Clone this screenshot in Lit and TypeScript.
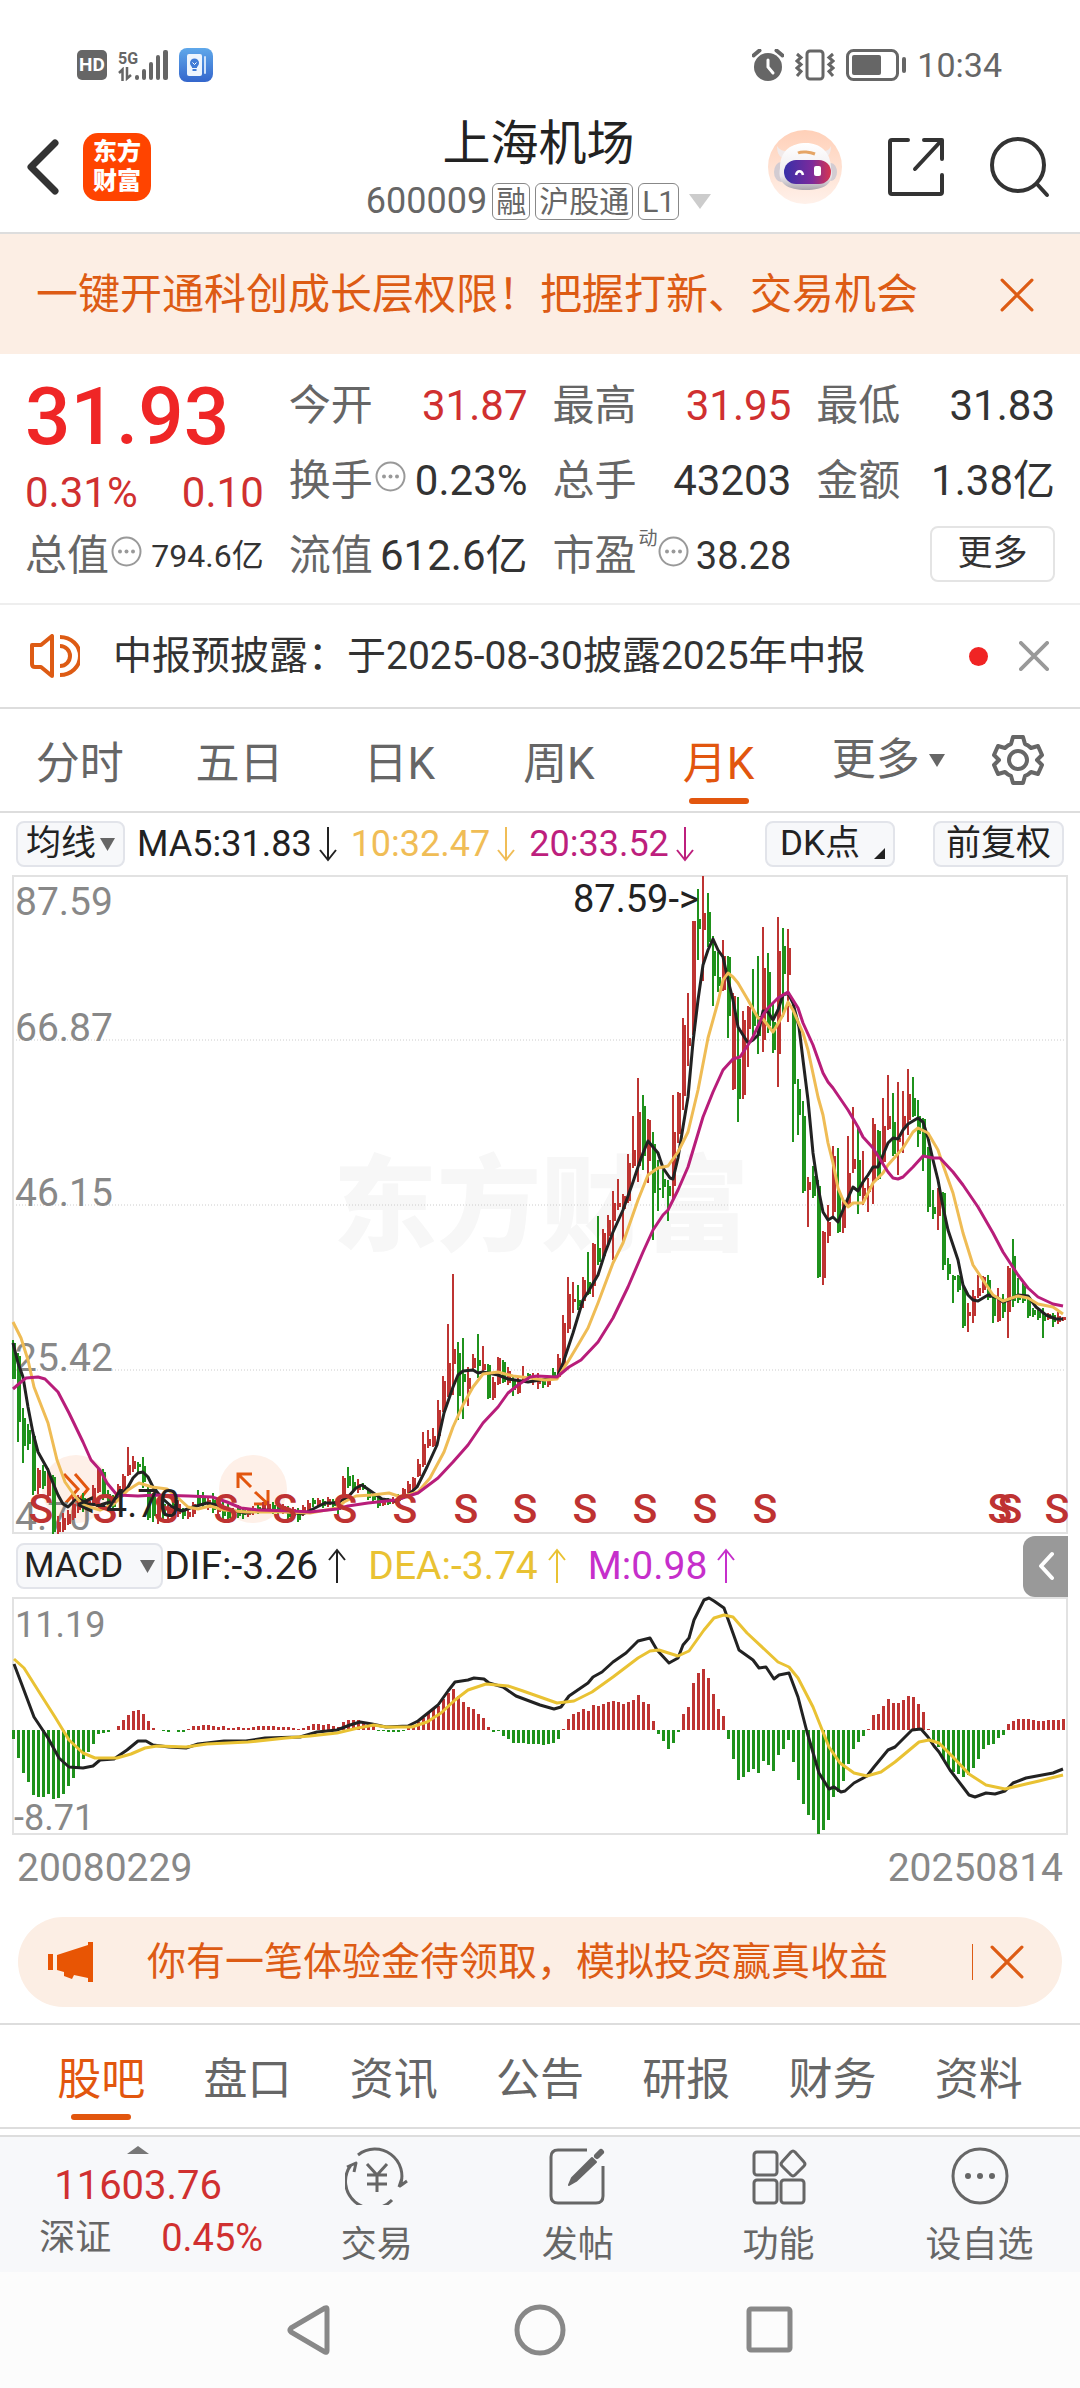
import { LitElement, html, svg, css } from "lit";
import { customElement, property, state } from "lit/decorators.js";
import { classMap } from "lit/directives/class-map.js";

/* Monthly bars: colour, high, low, body top, body bottom (chart units, y down). */
const CANDLES = `
g 464 503 467 503|g 477 566 480 546|g 532 587 542 570|g 548 574 554 568|g 554 619 560 615|r 592 618 594 612|g 589 613 595 610|r 592 626 600 620|g 599 658 601 656|r 640 658 646 656
r 637 656 642 654|r 634 649 638 648|r 621 644 628 642|r 619 637 624 634|g 617 636 622 632|r 624 632 625 631|r 609 629 612 628|r 593 617 594 616|g 593 624 596 620|g 614 629 618 628
g 619 634 621 631|r 608 624 610 622|r 598 621 600 620|r 571 600 589 599|r 580 596 585 593|g 586 596 588 591|g 581 612 590 606|g 611 644 615 642|g 617 646 620 640|r 627 648 630 642
g 624 644 628 640|r 629 646 631 640|g 626 644 628 640|r 624 641 628 638|g 632 643 634 640|r 634 643 636 641|r 626 641 628 638|g 614 629 620 628|g 616 631 622 628|r 622 634 624 632
g 617 637 624 634|r 625 638 628 636|g 626 643 630 640|g 628 644 632 642|r 632 645 634 641|g 629 642 632 640|g 631 643 634 639|r 632 641 634 639|r 630 639 632 637|g 629 638 631 636
r 626 637 629 635|r 625 637 628 634|g 626 638 629 636|g 629 640 631 637|r 628 638 630 636|g 630 643 633 641|r 631 643 633 640|g 632 646 634 644|r 629 640 631 638|r 624 636 627 634
g 622 631 624 628|r 622 631 624 629|g 623 632 625 630|r 621 631 623 629|g 623 632 625 630|g 622 638 624 634|r 600 624 602 622|g 591 612 600 610|g 599 614 606 614|r 603 617 608 614
g 607 614 609 613|g 614 624 616 622|g 617 626 619 624|g 621 632 622 630|r 622 630 624 629|g 622 629 623 628|r 621 628 623 627|g 618 627 620 625|r 612 621 613 620|r 605 617 608 616
r 601 614 602 612|r 583 601 588 600|r 556 591 568 589|r 554 572 563 570|r 552 571 560 570|r 524 564 534 560|r 500 536 505 534|r 448 521 487 519|r 398 519 473 488|g 466 544 477 520
g 462 543 498 506|r 491 530 502 513|r 478 494 482 492|g 458 502 484 490|r 470 496 488 494|g 488 523 489 522|r 501 524 506 522|r 481 509 482 508|g 484 507 486 506|r 491 509 495 507
g 501 520 505 514|r 500 518 505 517|r 490 506 500 505|g 497 504 498 503|r 497 509 500 506|r 497 513 503 508|g 502 512 503 509|r 500 511 501 509|g 492 502 496 501|r 478 502 482 501
r 439 491 447 490|r 401 457 418 453|r 406 437 423 426|g 409 434 424 430|r 401 432 404 425|g 376 419 406 418|r 367 421 368 410|g 340 389 372 386|r 353 384 357 380|r 339 371 344 360
r 315 384 327 345|r 303 334 327 331|r 318 367 320 333|r 278 327 287 325|r 240 292 274 290|r 202 306 236 290|g 219 294 230 280|r 243 307 244 285|g 256 364 268 317|g 284 335 312 314
g 294 322 303 311|g 304 345 310 320|r 219 324 256 310|r 216 267 217 258|r 142 234 149 220|r 117 190 162 170|r 45 159 45 155|g 13 84 43 53|r 0 105 37 54|g 17 71 36 66
g 60 130 75 100|g 76 116 101 110|r 64 115 80 114|g 80 162 81 140|r 117 214 120 213|g 121 246 183 223|r 135 223 144 219|r 130 191 131 153|g 93 162 136 150|g 80 178 140 160
r 51 176 92 164|g 77 157 96 150|g 127 177 146 174|r 41 211 75 178|g 52 141 70 98|r 53 146 72 99|g 134 266 136 208|g 203 259 213 239|g 225 317 240 315|r 301 351 306 314
g 290 322 300 320|g 304 402 310 401|r 355 409 356 402|r 329 367 346 360|r 270 342 280 336|g 272 357 318 356|r 324 357 330 352|r 260 332 297 331|r 231 297 283 293|g 251 338 284 320
r 275 329 312 320|r 302 336 310 316|r 242 328 248 304|g 254 304 255 303|r 222 289 250 286|r 199 254 240 253|g 217 280 246 278|r 206 299 262 266|r 215 277 240 250|r 193 259 218 244
g 201 241 222 240|g 224 271 240 258|g 242 295 243 280|g 271 336 273 331|g 314 343 331 338|r 312 354 313 340|g 316 394 317 389|g 382 404 388 398|g 399 427 400 404|g 399 416 400 414
g 406 452 412 450|r 427 456 436 440|r 414 447 420 440|r 399 422 412 420|r 400 417 401 414|g 399 424 404 422|g 421 447 422 440|r 412 446 425 445|g 418 442 424 436|r 390 462 392 436
g 363 431 380 425|g 402 427 418 424|g 407 427 410 425|g 421 442 424 440|g 432 441 434 439|g 434 444 436 442|g 432 462 440 445|r 437 444 438 443|g 437 451 439 446|r 436 448 440 446
r 441 445 441 444`
  .trim()
  .split(/[|\n]/)
  .map((row) => {
    const [tone, ...values] = row.split(" ");
    return { tone, values: values.map(Number) };
  });

const HISTOGRAM = [
  -9, -28, -43, -52, -65, -67, -67, -64, -69, -68, -64, -56, -48, -38, -29, -22, -14, -4, -3, -2,
  0, 4, 10, 15, 19, 20, 16, 9, 2, 0, -1, -2, 0, -2, -2, 1, 4, 4, 5, 5,
  4, 3, 4, 2, 2, 3, 2, 2, 3, 4, 4, 4, 4, 3, 3, 3, 2, 1, 2, 4,
  6, 6, 5, 6, 4, 3, 8, 10, 10, 10, 7, 6, 4, -1, -1, -2, -2, -2, -1, 2,
  4, 8, 12, 17, 21, 24, 31, 37, 41, 34, 28, 23, 21, 16, 12, 3, -2, -1, -6, -9,
  -13, -13, -13, -14, -14, -14, -15, -14, -13, -9, 1, 11, 16, 18, 21, 19, 25, 24, 26, 28,
  29, 28, 26, 28, 30, 35, 28, 26, 9, -4, -11, -19, -13, -2, 16, 23, 47, 57, 61, 52,
  36, 21, 14, -9, -29, -50, -47, -42, -39, -43, -31, -35, -41, -25, -19, -10, -32, -50, -74, -85,
  -90, -104, -100, -90, -67, -62, -51, -34, -19, -12, -6, 1, 15, 16, 24, 31, 27, 27, 30, 34,
  33, 26, 18, 1, -11, -17, -30, -38, -42, -44, -47, -45, -38, -29, -19, -15, -14, -8, -5, 6,
  9, 11, 11, 11, 10, 9, 9, 10, 10, 10, 11,
];

const MA5 =
  "13,467 18,487 23,501 28,531 33,557 38,576 48,594 53,607 58,619 63,628 68,631 77,622 88,628 100,629 110,626 119,622 128,611 133,602 138,597 143,596 148,601 153,611 162,622 172,631 182,635 193,631 207,627 217,629 227,634 246,637 262,634 282,635 303,638 317,631 325,627 337,627 348,621 356,612 362,609 372,616 382,623 396,625 408,619 417,611 427,591 437,569 444,537 453,511 458,499 463,495 473,494 478,497 483,496 498,499 508,503 528,506 540,504 557,502 563,487 573,457 583,424 588,416 598,399 605,377 613,356 623,334 633,306 638,291 643,277 648,265 658,277 663,292 670,302 673,303 678,282 683,251 688,221 693,166 698,124 703,89 708,74 713,63 718,74 723,81 728,104 733,124 738,151 743,159 748,167 753,164 758,159 763,135 768,136 773,144 778,134 783,119 788,117 793,127 799,151 803,184 808,224 813,277 818,311 823,336 828,344 833,341 838,346 843,334 848,322 853,311 858,315 863,306 868,299 873,291 878,291 883,279 888,267 893,262 898,263 903,254 908,248 918,242 923,246 928,262 933,284 938,304 943,331 948,354 958,384 963,409 968,419 973,424 978,425 988,419 998,422 1003,426 1013,422 1018,419 1028,420 1036,431 1046,439 1056,443 1063,443";
const MA10 =
  "13,446 21,462 28,484 34,511 48,547 57,584 65,606 74,619 83,629 100,634 114,628 128,614 139,607 152,611 167,613 177,621 188,631 198,633 210,630 224,634 246,636 282,636 310,637 337,632 344,626 356,620 372,619 389,617 401,621 418,616 430,602 444,576 453,551 463,529 473,511 483,498 498,496 513,500 530,502 545,504 557,503 569,484 578,469 588,452 598,427 613,387 623,367 638,324 648,299 658,292 668,290 678,276 688,256 698,214 708,162 718,126 723,104 728,97 733,101 738,107 748,124 758,142 763,143 773,156 783,139 788,126 793,134 803,157 808,174 818,221 823,239 828,267 833,287 838,312 843,324 848,331 853,327 863,327 873,307 883,297 888,289 903,272 913,256 918,252 928,257 938,274 943,289 953,317 963,357 973,389 983,404 993,419 1003,425 1018,420 1028,422 1038,428 1053,431 1063,438";
const MA20 =
  "13,513 21,506 26,502 38,501 45,503 58,516 69,537 83,566 91,584 100,594 107,607 117,619 138,620 155,619 189,620 212,621 227,626 241,632 258,634 293,635 310,636 337,633 348,630 368,627 396,624 418,617 438,602 453,586 468,569 483,547 498,531 508,517 518,509 530,501 537,500 557,501 569,491 581,484 598,466 613,442 628,411 643,376 653,354 663,339 668,334 678,314 688,291 703,241 713,216 723,194 733,183 740,181 748,169 753,161 763,139 768,132 778,122 788,116 798,132 803,147 813,169 823,197 828,206 833,212 848,234 858,251 863,261 873,272 888,296 893,302 898,303 903,301 913,291 923,280 933,282 940,282 953,296 963,309 978,331 993,357 1003,376 1018,399 1028,412 1038,421 1053,428 1063,430";
const DIF =
  "14,66 22,87 34,119 48,140 59,160 69,169 83,170 93,168 100,162 114,161 127,152 138,143 146,143 153,147 169,149 186,150 198,146 224,143 246,143 265,140 300,139 317,134 337,132 350,127 360,124 372,126 386,129 408,128 418,123 438,107 448,93 455,84 468,82 474,80 484,81 489,85 503,89 516,98 540,107 554,111 561,109 569,98 588,85 593,79 602,74 613,64 626,55 638,43 650,40 657,52 669,65 678,60 683,47 689,40 694,22 704,2 709,0 714,3 724,10 729,24 739,52 753,62 759,70 766,69 774,81 779,77 789,75 798,99 807,134 819,175 829,191 834,189 841,194 845,193 854,185 867,178 874,169 888,152 895,149 912,132 921,131 928,139 934,148 939,154 950,172 969,197 975,199 986,195 995,196 1005,193 1013,185 1026,180 1053,175 1063,171";
const DEA =
  "14,61 24,70 41,97 55,119 69,142 83,155 95,160 117,160 131,156 145,150 157,148 186,149 207,146 248,144 286,140 310,138 337,135 358,130 374,127 386,129 412,129 427,124 441,115 455,102 468,92 486,86 508,88 523,93 540,99 557,105 574,103 592,94 613,79 638,60 650,53 659,52 678,58 689,53 704,32 714,20 724,17 733,19 747,35 778,64 789,69 798,80 813,109 829,149 840,165 854,175 867,178 881,174 895,164 919,144 929,142 939,145 953,159 969,176 986,187 1005,191 1026,186 1039,183 1063,177";

const EVENT_MARKS = [41, 105, 166, 226, 285, 345, 405, 466, 525, 585, 645, 705, 765, 1000, 1010, 1057];
const barX = (index: number) => 12 + index * 5;

const reset = css`
  *,
  *::before,
  *::after {
    box-sizing: border-box;
  }
  button {
    margin: 0;
    padding: 0;
    border: 0;
    background: none;
    color: inherit;
    font: inherit;
    cursor: pointer;
  }
  svg {
    display: block;
    flex: none;
  }
`;

const crossIcon = (size: number, width: number) => html`
  <svg width=${size} height=${size} viewBox="0 0 32 32" fill="none" stroke="currentColor" stroke-width=${width} stroke-linecap="round" aria-hidden="true">
    <path d="M2 2 30 30M30 2 2 30" />
  </svg>
`;

const trendArrow = (up: boolean) => html`
  <svg width="18" height="36" viewBox="0 0 18 36" fill="none" stroke="currentColor" stroke-width="2" aria-hidden="true">
    <path d=${up ? "M9 35V3M1 12 9 2 17 12" : "M9 1V33M1 24 9 34 17 24"} />
  </svg>
`;

const infoIcon = html`
  <svg width="31" height="31" viewBox="0 0 31 31" aria-hidden="true">
    <circle cx="15.5" cy="15.5" r="14" fill="none" stroke="#999" stroke-width="2" />
    <g fill="#999"><circle cx="9" cy="15.5" r="2" /><circle cx="15.5" cy="15.5" r="2" /><circle cx="22" cy="15.5" r="2" /></g>
  </svg>
`;

@customElement("phone-status")
class PhoneStatus extends LitElement {
  static styles = [
    reset,
    css`
      :host {
        display: flex;
        justify-content: space-between;
        align-items: center;
        height: 98px;
        padding: 32px 78px 0 77px;
        color: #666;
        font-size: 34px;
        line-height: 40px;
      }
      .group {
        display: flex;
        align-items: center;
        gap: 11px;
      }
      .hd {
        width: 30px;
        height: 30px;
        border-radius: 5px;
        background: #666;
        color: #fff;
        font-size: 19px;
        font-weight: 700;
        line-height: 30px;
        text-align: center;
      }
      .network {
        display: grid;
        grid-template-columns: 17px 33px;
        align-items: end;
      }
      .generation {
        font-size: 16px;
        font-weight: 700;
        line-height: 17px;
      }
      .signal {
        grid-row: 1 / 3;
        grid-column: 2;
      }
    `,
  ];

  render() {
    return html`
      <div class="group">
        <span class="hd">HD</span>
        <span class="network">
          <span class="generation">5G</span>
          <svg width="14" height="14" viewBox="0 0 14 14" fill="none" stroke="currentColor" stroke-width="2.5" aria-hidden="true">
            <path d="M4.500 14V2.500L1 6M9 0V11.500L13 8" />
          </svg>
          <svg class="signal" width="33" height="32" viewBox="0 0 33 32" fill="currentColor" aria-hidden="true">
            <rect x="0" y="26" width="4" height="5" rx="2" /><rect x="7" y="20" width="4" height="11" rx="2" />
            <rect x="14" y="13" width="4" height="18" rx="2" /><rect x="21" y="6" width="4" height="25" rx="2" />
            <rect x="28" y="1" width="5" height="30" rx="2" />
          </svg>
        </span>
        <svg width="34" height="34" viewBox="0 0 34 34" aria-hidden="true">
          <defs>
            <linearGradient id="book" x1="0" y1="0" x2="0" y2="1"><stop offset="0" stop-color="#5fa8ea" /><stop offset="1" stop-color="#3466cc" /></linearGradient>
          </defs>
          <rect width="34" height="34" rx="8" fill="url(#book)" />
          <rect x="8" y="6" width="15" height="22" rx="2" fill="#eef5fd" />
          <rect x="25" y="8" width="2" height="18" rx="1" fill="#cfe2fa" />
          <circle cx="15.500" cy="15" r="4.500" fill="#3f7bd6" /><path d="M13 18h5v2h-5zM13.500 21h4v2h-4z" fill="#3f7bd6" />
          <path d="M13.500 14.500 15.500 16.500 17.500 14.500" fill="none" stroke="#fff" stroke-width="1" />
        </svg>
      </div>
      <div class="group">
        <svg width="32" height="32" viewBox="0 0 32 32" aria-hidden="true">
          <circle cx="16" cy="18" r="14" fill="#666" />
          <path d="M1.500 6.500 7.500 1.500M30.500 6.500 24.500 1.500" stroke="#666" stroke-width="4" stroke-linecap="round" />
          <path d="M16 11V18L21 24" fill="none" stroke="#fff" stroke-width="3" stroke-linecap="round" />
        </svg>
        <svg width="40" height="32" viewBox="0 0 40 32" fill="none" stroke="#666" stroke-width="3" aria-hidden="true">
          <rect x="12" y="2" width="16" height="28" rx="3" />
          <path d="M2 5 6 8.500 2 12 6 15.500 2 19 6 22.500 2 27M38 5 34 8.500 38 12 34 15.500 38 19 34 22.500 38 27" />
        </svg>
        <svg width="60" height="32" viewBox="0 0 60 32" aria-hidden="true">
          <rect x="1.500" y="1.500" width="50" height="29" rx="6" fill="none" stroke="#666" stroke-width="3" />
          <rect x="6" y="6" width="29" height="20" rx="2" fill="#666" /><rect x="56" y="8" width="4" height="16" rx="2" fill="#666" />
        </svg>
        <time>10:34</time>
      </div>
    `;
  }
}

@customElement("stock-header")
class StockHeader extends LitElement {
  static styles = [
    reset,
    css`
      :host {
        display: grid;
        grid-template-columns: 1fr auto 1fr;
        align-items: center;
        height: 136px;
        padding: 4px 30px 0 27px;
        border-bottom: 2px solid #ddd;
      }
      .side {
        display: flex;
        align-items: center;
        gap: 24px;
      }
      .actions {
        justify-content: flex-end;
        gap: 45px;
      }
      .brand {
        display: grid;
        place-content: center;
        width: 68px;
        height: 68px;
        border-radius: 15px;
        background: #ff4400;
        color: #fff;
        font-size: 24px;
        font-weight: 900;
        line-height: 29px;
      }
      .brand span {
        display: block;
      }
      .title {
        display: grid;
        justify-items: center;
        gap: 10px;
      }
      h1 {
        margin: 0;
        color: #222;
        font-size: 48px;
        font-weight: 400;
        line-height: 58px;
      }
      .code {
        display: flex;
        align-items: center;
        gap: 5px;
        color: #666;
        font-size: 36px;
        line-height: 36px;
      }
      .tag {
        height: 37px;
        padding: 0 3px;
        border: 1px solid #888;
        border-radius: 6px;
        font-size: 30px;
        line-height: 35px;
      }
      .caret {
        margin-left: 5px;
      }
    `,
  ];

  render() {
    return html`
      <div class="side">
        <button aria-label="返回">
          <svg width="32" height="56" viewBox="0 0 32 56" fill="none" stroke="#333" stroke-width="7" stroke-linecap="round" stroke-linejoin="round"><path d="M28 4 4 28 28 52" /></svg>
        </button>
        <button class="brand"><span>东方</span><span>财富</span></button>
      </div>
      <div class="title">
        <h1>上海机场</h1>
        <div class="code">
          <span>600009</span><span class="tag">融</span><span class="tag">沪股通</span><span class="tag">L1</span>
          <svg class="caret" width="22" height="15" viewBox="0 0 22 15" aria-hidden="true"><path d="M0 0H22L11 15Z" fill="#ccc" /></svg>
        </div>
      </div>
      <div class="side actions">
        <button aria-label="智能助手">
          <svg width="74" height="74" viewBox="0 0 74 74">
            <defs>
              <linearGradient id="halo" x1="0" y1="0" x2="0" y2="1"><stop offset="0" stop-color="#ffd0b8" /><stop offset="1" stop-color="#fff1ea" /></linearGradient>
              <linearGradient id="shell" x1="0" y1="0" x2="0" y2="1"><stop offset="0" stop-color="#fff" /><stop offset="0.700" stop-color="#eeebee" /><stop offset="1" stop-color="#aaa5ad" /></linearGradient>
              <linearGradient id="visor"><stop offset="0" stop-color="#3730a8" /><stop offset="0.600" stop-color="#7c2a9c" /><stop offset="1" stop-color="#d8344f" /></linearGradient>
            </defs>
            <circle cx="37" cy="37" r="37" fill="url(#halo)" />
            <path d="M9 16C9 24 12 29 20 29L24 20C17 22 12 21 9 16ZM63 16C63 24 60 29 52 29L50 20C57 22 61 21 63 16Z" fill="#f1eaea" />
            <ellipse cx="13" cy="42" rx="7" ry="10" fill="#d3ccd2" /><ellipse cx="63" cy="42" rx="6" ry="9" fill="#d3ccd2" />
            <path d="M12 38C12 20 24 13 38 13S63 22 63 38C67 54 56 60 38 60S9 54 12 38Z" fill="url(#shell)" />
            <rect x="16" y="30" width="47" height="24" rx="12" fill="url(#visor)" />
            <path d="M30 23C34 21 42 22 47 24" fill="none" stroke="#e5a566" stroke-width="3" />
            <path d="M28 45C29 40 34 40 35 45" fill="none" stroke="#fff" stroke-width="2.500" /><rect x="46" y="36" width="7" height="10" rx="2" fill="#fff" />
          </svg>
        </button>
        <button aria-label="分享">
          <svg width="58" height="60" viewBox="0 0 58 60" fill="none" stroke="#333" stroke-width="4" stroke-linecap="round" stroke-linejoin="round">
            <path d="M21 3H5Q3 3 3 5V55Q3 57 5 57H53Q55 57 55 55V38M37 3H55V22M54 4 28 32" />
          </svg>
        </button>
        <button aria-label="搜索">
          <svg width="60" height="62" viewBox="0 0 60 62" fill="none" stroke="#333" stroke-width="4" stroke-linecap="round"><circle cx="28" cy="29" r="26" /><path d="M47 48 57 59" /></svg>
        </button>
      </div>
    `;
  }
}

@customElement("quote-panel")
class QuotePanel extends LitElement {
  static styles = [
    reset,
    css`
      :host {
        display: grid;
        grid-template-columns: repeat(4, 1fr);
        grid-template-rows: repeat(3, 75px);
        column-gap: 25px;
        padding: 14px 25px 10px;
        border-bottom: 2px solid #eee;
        color: #333;
        font-size: 42px;
        line-height: 54px;
      }
      .price {
        grid-row: 1 / 3;
        color: #d03030;
      }
      .last {
        height: 98px;
        color: #ef2626;
        font-size: 80px;
        font-weight: 500;
        line-height: 98px;
      }
      .change,
      .cell {
        display: flex;
        justify-content: space-between;
        align-items: center;
        white-space: nowrap;
      }
      .cell > span:first-child {
        display: flex;
        align-items: center;
        color: #666;
      }
      .cell svg {
        margin: 0 0 8px 2px;
      }
      .cell sup {
        align-self: flex-start;
        margin-left: 2px;
        font-size: 19px;
        line-height: 20px;
      }
      .cell sup + svg {
        margin-left: 0;
      }
      .up {
        color: #d03030;
      }
      .small {
        font-size: 32px;
      }
      .medium {
        font-size: 38px;
      }
      .more {
        place-self: center end;
        width: 125px;
        height: 56px;
        margin-bottom: 4px;
        border: 2px solid #e4e4e4;
        border-radius: 8px;
        font-size: 35px;
        line-height: 50px;
      }
    `,
  ];

  render() {
    return html`
      <div class="price">
        <div class="last">31.93</div>
        <div class="change"><span>0.31%</span><span>0.10</span></div>
      </div>
      <div class="cell"><span>今开</span><span class="up">31.87</span></div>
      <div class="cell"><span>最高</span><span class="up">31.95</span></div>
      <div class="cell"><span>最低</span><span>31.83</span></div>
      <div class="cell"><span>换手${infoIcon}</span><span>0.23%</span></div>
      <div class="cell"><span>总手</span><span>43203</span></div>
      <div class="cell"><span>金额</span><span>1.38亿</span></div>
      <div class="cell"><span>总值${infoIcon}</span><span class="small">794.6亿</span></div>
      <div class="cell"><span>流值</span><span>612.6亿</span></div>
      <div class="cell"><span>市盈<sup>动</sup>${infoIcon}</span><span class="medium">38.28</span></div>
      <button class="more">更多</button>
    `;
  }
}

@customElement("period-tabs")
class PeriodTabs extends LitElement {
  @state() private active = 4;

  static styles = [
    reset,
    css`
      :host {
        display: grid;
        grid-template-columns: repeat(5, 16fr) 18fr 8fr;
        align-items: stretch;
        height: 104px;
        padding-right: 22px;
        border-bottom: 2px solid #ddd;
        color: #666;
        font-size: 44px;
        line-height: 56px;
      }
      .tab {
        display: flex;
        flex-direction: column;
        align-items: center;
        justify-content: flex-end;
        gap: 6px;
        padding-bottom: 7px;
      }
      .tab::after {
        width: 60px;
        height: 6px;
        border-radius: 3px;
        content: "";
      }
      .on {
        color: #e2560e;
      }
      .on::after {
        background: #e2560e;
      }
      .more {
        display: flex;
        align-items: center;
        justify-content: center;
        gap: 9px;
      }
      .gear {
        display: grid;
        place-items: center;
      }
    `,
  ];

  render() {
    const tabs = ["分时", "五日", "日K", "周K", "月K"];
    return html`
      ${tabs.map(
        (label, index) => html`
          <button class=${classMap({ tab: true, on: index === this.active })} aria-pressed=${index === this.active} @click=${() => (this.active = index)}>${label}</button>
        `
      )}
      <button class="more">
        更多<svg width="16" height="13" viewBox="0 0 16 13" aria-hidden="true"><path d="M0 0H16L8 13Z" fill="#666" /></svg>
      </button>
      <button class="gear" aria-label="设置">
        <svg width="52" height="52" viewBox="0 0 52 52" fill="none" stroke="#666" stroke-width="4" stroke-linejoin="round">
          <path d="M21 3H31L33 10Q36 11 39 14L46 12L50 21L45 26L50 31L46 40L39 38Q36 41 33 42L31 49H21L19 42Q16 41 13 38L6 40L2 31L7 26L2 21L6 12L13 14Q16 11 19 10Z" />
          <circle cx="26" cy="26" r="9" />
        </svg>
      </button>
    `;
  }
}

@customElement("chart-section")
class ChartSection extends LitElement {
  static styles = [
    reset,
    css`
      :host {
        display: block;
        padding: 0 12px;
      }
      .bar {
        display: flex;
        align-items: center;
        height: 62px;
        padding-left: 4px;
        color: #222;
        font-size: 36px;
        line-height: 42px;
        white-space: nowrap;
      }
      .chip {
        display: flex;
        align-items: center;
        height: 46px;
        padding: 0 8px;
        border: 2px solid #e2e4ea;
        border-radius: 8px;
        background: #f7f8fa;
        font-size: 35px;
      }
      .average {
        gap: 4px;
        margin-right: 12px;
      }
      .macd {
        gap: 17px;
        padding: 0 6px;
        margin-right: 1px;
      }
      .reading {
        display: flex;
        align-items: center;
        gap: 7px;
        margin-right: 14px;
      }
      .wide {
        font-size: 39px;
      }
      .wide .reading {
        gap: 10px;
        margin-right: 22px;
      }
      .gold {
        color: #f0bd56;
      }
      .berry {
        color: #bd1f7d;
      }
      .yellow {
        color: #e9c233;
      }
      .violet {
        color: #c62fcb;
      }
      .push {
        margin-left: auto;
      }
      .point {
        padding: 0 8px 0 13px;
      }
      .point svg {
        align-self: flex-end;
        margin: 0 0 6px 14px;
      }
      .adjust {
        margin: 0 4px 0 38px;
        padding: 0 11px;
      }
      .fold {
        display: grid;
        place-items: center;
        width: 45px;
        height: 61px;
        border-radius: 12px 0 0 12px;
        background: #999;
      }
      .stage {
        position: relative;
      }
      .plot {
        position: relative;
        width: 100%;
        height: auto;
        overflow: visible;
        pointer-events: none;
      }
      .float {
        position: absolute;
        bottom: 12px;
        display: grid;
        place-items: center;
        width: 68px;
        height: 68px;
        border-radius: 50%;
        background: #fef0e8;
      }
      .jump {
        left: 30px;
      }
      .expand {
        left: 207px;
      }
      .frame {
        fill: none;
        stroke: #e2e2e2;
        stroke-width: 2;
      }
      .grid {
        stroke: #ccc;
        stroke-dasharray: 1 2;
      }
      .r {
        fill: #be3432;
      }
      .g {
        fill: #1f921c;
      }
      .line {
        fill: none;
        stroke-width: 3;
        stroke-linejoin: round;
      }
      .axis {
        fill: #888;
        font-size: 39px;
      }
      .axis-small {
        fill: #888;
        font-size: 36px;
      }
      .note {
        fill: #222;
        font-size: 38px;
      }
      .mark {
        fill: #be3232;
        font-size: 41px;
        font-weight: 500;
        text-anchor: middle;
      }
      .watermark {
        fill: #f7f7f7;
        font-size: 104px;
        font-weight: 900;
        text-anchor: middle;
      }
      .dates {
        display: flex;
        justify-content: space-between;
        padding: 10px 5px 26px;
        color: #888;
        font-size: 39px;
        line-height: 46px;
      }
    `,
  ];

  private pricePlot() {
    return html`
      <svg class="plot" viewBox="12 -1 1056 660" role="img" aria-label="月K线">
        <text class="watermark" x="541" y="367">东方财富</text>
        ${[164, 329, 494].map((y) => svg`<line class="grid" x1="13" x2="1067" y1=${y} y2=${y} />`)}
        <rect class="frame" x="13" y="0" width="1054" height="657" />
        ${[
          [39, "87.59"],
          [165, "66.87"],
          [330, "46.15"],
          [495, "25.42"],
          [654, "4.70"],
        ].map(([y, label]) => svg`<text class="axis" x="15" y=${y}>${label}</text>`)}
        ${CANDLES.map(({ tone, values: [high, low, top, bottom] }, index) => {
          const x = barX(index);
          return svg`<path class=${tone} d=${`M${x} ${high}h2V${low}h-2ZM${x} ${top}h4V${bottom}h-4Z`} />`;
        })}
        <polyline class="line" stroke="#222" points=${MA5} />
        <polyline class="line" stroke="#efbc55" points=${MA10} />
        <polyline class="line" stroke="#b81d7a" points=${MA20} />
        ${EVENT_MARKS.map((x) => svg`<text class="mark" x=${x} y="647">S</text>`)}
        <text class="note" x="573" y="36">87.59-&gt;</text>
        <text class="note" x="76" y="641">&lt;-4.70</text>
      </svg>
    `;
  }

  private macdPlot() {
    return html`
      <svg class="plot" viewBox="12 -1 1056 238" role="img" aria-label="MACD">
        <rect class="frame" x="13" y="0" width="1054" height="236" />
        <text class="axis-small" x="15" y="39">11.19</text>
        <text class="axis-small" x="14" y="232">-8.71</text>
        ${HISTOGRAM.map((value, index) =>
          value
            ? svg`<rect class=${value > 0 ? "r" : "g"} x=${barX(index)} y=${132 - Math.max(value, 0)} width="3" height=${Math.abs(value)} />`
            : null
        )}
        <polyline class="line" stroke="#222" points=${DIF} />
        <polyline class="line" stroke="#e9c233" points=${DEA} />
      </svg>
    `;
  }

  render() {
    return html`
      <div class="bar">
        <button class="chip average">
          均线<svg width="15" height="13" viewBox="0 0 15 13" aria-hidden="true"><path d="M0 0H15L7.500 13Z" fill="#666" /></svg>
        </button>
        <span class="reading">MA5:31.83${trendArrow(false)}</span>
        <span class="reading gold">10:32.47${trendArrow(false)}</span>
        <span class="reading berry">20:33.52${trendArrow(false)}</span>
        <button class="chip push point">
          DK点<svg width="11" height="11" viewBox="0 0 11 11" aria-hidden="true"><path d="M11 0V11H0Z" fill="#222" /></svg>
        </button>
        <button class="chip adjust">前复权</button>
      </div>
      <div class="stage">
        <button class="float jump" aria-label="最新">
          <svg width="28" height="38" viewBox="0 0 28 38" fill="none" stroke="#e2560e" stroke-width="3"><path d="M2 4 16 19 2 35M13 4 26 19 13 35" /></svg>
        </button>
        <button class="float expand" aria-label="全屏">
          <svg width="34" height="34" viewBox="0 0 34 34" fill="none" stroke="#e2560e" stroke-width="3"><path d="M2 16V2H16M2 2 15 15M32 18V32H18M32 32 19 20" /></svg>
        </button>
        ${this.pricePlot()}
      </div>
      <div class="bar wide">
        <button class="chip macd">
          MACD<svg width="15" height="13" viewBox="0 0 15 13" aria-hidden="true"><path d="M0 0H15L7.500 13Z" fill="#666" /></svg>
        </button>
        <span class="reading">DIF:-3.26${trendArrow(true)}</span>
        <span class="reading yellow">DEA:-3.74${trendArrow(true)}</span>
        <span class="reading violet">M:0.98${trendArrow(true)}</span>
        <button class="fold push" aria-label="收起">
          <svg width="16" height="30" viewBox="0 0 16 30" fill="none" stroke="#fff" stroke-width="4" stroke-linecap="round" stroke-linejoin="round"><path d="M14 3 3 15 14 27" /></svg>
        </button>
      </div>
      ${this.macdPlot()}
      <div class="dates"><time>20080229</time><time>20250814</time></div>
    `;
  }
}

@customElement("content-tabs")
class ContentTabs extends LitElement {
  @state() private active = 0;
  @property({ attribute: false }) labels = ["股吧", "盘口", "资讯", "公告", "研报", "财务", "资料"];

  static styles = [
    reset,
    css`
      :host {
        display: grid;
        grid-template-columns: repeat(7, 1fr);
        height: 106px;
        margin-top: 16px;
        padding: 0 28px;
        border-top: 2px solid #ddd;
        border-bottom: 2px solid #ddd;
        color: #666;
        font-size: 44px;
        line-height: 56px;
      }
      .tab {
        display: flex;
        flex-direction: column;
        align-items: center;
        justify-content: flex-end;
        gap: 6px;
        padding-bottom: 7px;
      }
      .tab::after {
        width: 60px;
        height: 6px;
        border-radius: 3px;
        content: "";
      }
      .on {
        color: #e2560e;
      }
      .on::after {
        background: #e2560e;
      }
    `,
  ];

  render() {
    return this.labels.map(
      (label, index) => html`
        <button class=${classMap({ tab: true, on: index === this.active })} aria-pressed=${index === this.active} @click=${() => (this.active = index)}>${label}</button>
      `
    );
  }
}

@customElement("bottom-bar")
class BottomBar extends LitElement {
  static styles = [
    reset,
    css`
      :host {
        display: grid;
        grid-template-columns: 11fr repeat(4, 8fr);
        height: 137px;
        margin-top: 6px;
        border-top: 2px solid #ddd;
        background: #f7f8fa;
        color: #666;
        font-size: 36px;
        line-height: 44px;
      }
      .index {
        display: grid;
        grid-template-rows: 17px 64px 40px;
        justify-items: center;
        align-content: start;
        align-items: center;
      }
      .caret {
        align-self: end;
      }
      .value {
        color: #d03030;
        font-size: 40px;
      }
      .detail {
        display: flex;
        gap: 50px;
        padding-left: 26px;
      }
      .rate {
        color: #d03030;
        font-size: 38px;
      }
      .item {
        display: grid;
        grid-template-rows: 58px 44px;
        justify-items: center;
        align-content: start;
        align-items: center;
        gap: 18px;
        padding-top: 10px;
      }
    `,
  ];

  private icons = [
    ["交易", svg`<path d="M13 8A27 27 0 0 1 55 39L62 34M47 53A27 27 0 0 1 6 18M2 20 11 16 9 25M57 31 54 40" /><path d="M22 17 32 28 42 17M32 28V45M22 28H42M22 37H42" />`],
    ["发帖", svg`<path d="M41 3H12Q5 3 5 10V49Q5 56 12 56H50Q57 56 57 49V19" /><path d="M23 38 26 31 46 11 50 15 30 34Z" fill="#666" stroke-width="2" /><path d="M51 9 55 5" stroke-width="6" stroke-linecap="round" />`],
    ["功能", svg`<rect x="7" y="5" width="23" height="23" rx="3" /><rect x="7" y="33" width="23" height="23" rx="3" /><rect x="34" y="33" width="23" height="23" rx="3" /><path d="M44 5Q46 3 48 5L57 15Q59 17 57 19L48 28Q46 30 44 28L35 19Q33 17 35 15Z" />`],
    ["设自选", svg`<circle cx="32" cy="29" r="27" /><g fill="#666" stroke="none"><circle cx="20" cy="29" r="3" /><circle cx="32" cy="29" r="3" /><circle cx="44" cy="29" r="3" /></g>`],
  ] as const;

  render() {
    return html`
      <button class="index">
        <svg class="caret" width="22" height="8" viewBox="0 0 22 8" aria-hidden="true"><path d="M0 8 11 0 22 8Z" fill="#777" /></svg>
        <span class="value">11603.76</span>
        <span class="detail"><span>深证</span><span class="rate">0.45%</span></span>
      </button>
      ${this.icons.map(
        ([label, shape]) => html`
          <button class="item">
            <svg width="64" height="58" viewBox="0 0 64 58" fill="none" stroke="#666" stroke-width="3" stroke-linejoin="round" aria-hidden="true">${shape}</svg>
            <span>${label}</span>
          </button>
        `
      )}
    `;
  }
}

@customElement("app-root")
class AppRoot extends LitElement {
  static styles = [
    reset,
    css`
      :host {
        display: block;
        background: #fff;
        color: #333;
        font-family: Roboto, "Noto Sans CJK SC", sans-serif;
      }
      .banner {
        display: flex;
        align-items: center;
        justify-content: space-between;
        height: 120px;
        padding: 2px 46px 0 36px;
        background: #fceee4;
        color: #dd5b14;
        font-size: 42px;
        line-height: 54px;
      }
      .notice {
        display: grid;
        grid-template-columns: 52px 1fr auto auto;
        align-items: center;
        height: 104px;
        padding: 0 31px 0 28px;
        border-bottom: 2px solid #ddd;
        font-size: 39px;
        line-height: 50px;
      }
      .notice span {
        padding-left: 33px;
      }
      .notice i {
        width: 19px;
        height: 19px;
        margin-right: 31px;
        border-radius: 50%;
        background: #f02424;
      }
      .dismiss {
        color: #999;
      }
      .promo {
        display: grid;
        grid-template-columns: 46px 1fr auto auto;
        align-items: center;
        height: 90px;
        margin: 0 18px;
        padding: 0 38px 0 29px;
        border-radius: 45px;
        background: #fceee4;
        color: #dd5b14;
        font-size: 39px;
        line-height: 50px;
      }
      .promo span {
        padding-left: 54px;
      }
      .promo i {
        width: 1px;
        height: 36px;
        margin-right: 17px;
        background: #dd5b14;
      }
      .system {
        display: flex;
        align-items: center;
        justify-content: center;
        gap: 179px;
        height: 116px;
        background: #fcfcfc;
      }
    `,
  ];

  render() {
    return html`
      <phone-status></phone-status>
      <stock-header></stock-header>
      <div class="banner">
        一键开通科创成长层权限！把握打新、交易机会
        <button aria-label="关闭">${crossIcon(34, 3)}</button>
      </div>
      <quote-panel></quote-panel>
      <div class="notice">
        <svg width="52" height="44" viewBox="0 0 52 44" fill="none" stroke="#dd5b14" stroke-width="4" stroke-linejoin="round" aria-hidden="true">
          <path d="M4 11H13L24 2V42L13 33H7Q4 33 4 30Z" /><path d="M32 3A20 19 0 0 1 32 41M32 12A10 10 0 0 1 32 32" />
        </svg>
        <span>中报预披露：于2025-08-30披露2025年中报</span>
        <i></i>
        <button class="dismiss" aria-label="关闭">${crossIcon(30, 4)}</button>
      </div>
      <period-tabs></period-tabs>
      <chart-section></chart-section>
      <div class="promo">
        <svg width="46" height="40" viewBox="0 0 46 40" fill="#e85504" aria-hidden="true"><path d="M1 12H6V28H1ZM10 13 41 3V0H46V40H41V36L27 33 25 37 17 34V30L10 28Z" /></svg>
        <span>你有一笔体验金待领取，模拟投资赢真收益</span>
        <i></i>
        <button aria-label="关闭">${crossIcon(34, 3)}</button>
      </div>
      <content-tabs></content-tabs>
      <bottom-bar></bottom-bar>
      <nav class="system">
        <button aria-label="后退">
          <svg width="50" height="52" viewBox="0 0 50 52" fill="none" stroke="#888" stroke-width="5" stroke-linejoin="round"><path d="M42 5V47Q42 49 40 48L6 28Q4 26 6 24L40 4Q42 3 42 5Z" /></svg>
        </button>
        <button aria-label="主页">
          <svg width="52" height="52" viewBox="0 0 52 52" fill="none" stroke="#888" stroke-width="5"><circle cx="26" cy="26" r="23" /></svg>
        </button>
        <button aria-label="最近任务">
          <svg width="50" height="52" viewBox="0 0 50 52" fill="none" stroke="#888" stroke-width="5"><rect x="4" y="5" width="41" height="41" rx="2" /></svg>
        </button>
      </nav>
    `;
  }
}
